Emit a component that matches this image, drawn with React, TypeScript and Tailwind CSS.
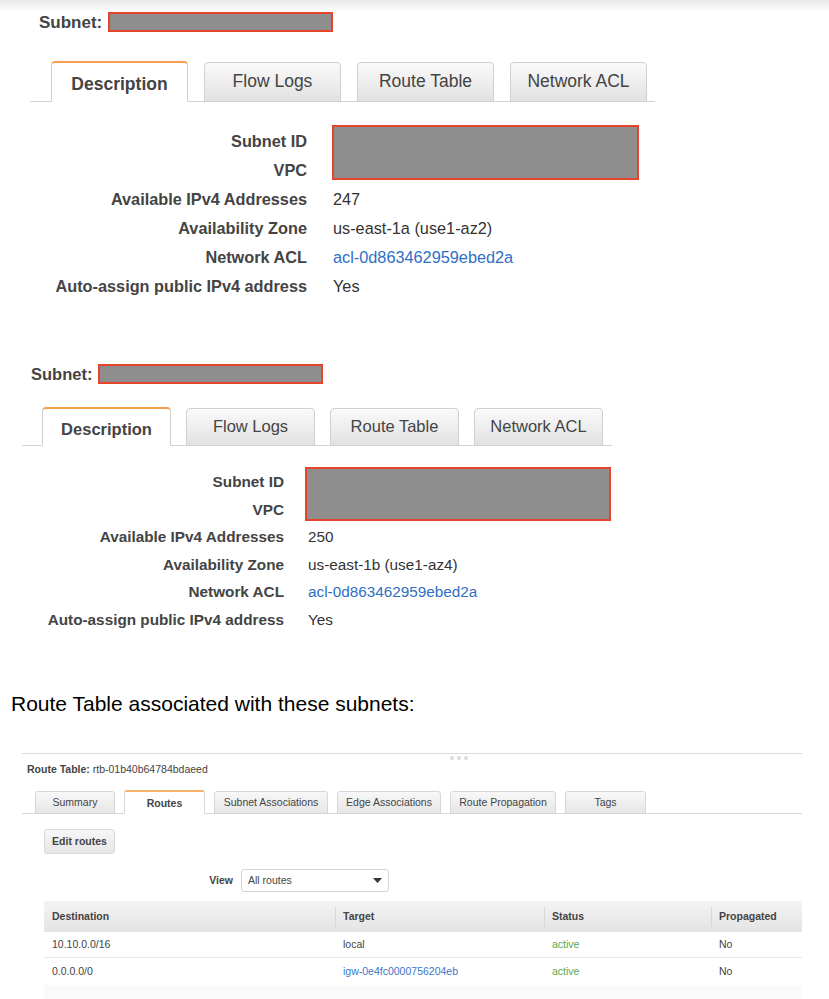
import React from "react";

type Row = { label: string; value: string; link?: boolean };

const redacted = "border-2 border-[#e8432b] bg-[#8e8e8e]";

const subnetA: Row[] = [
  { label: "Available IPv4 Addresses", value: "247" },
  { label: "Availability Zone", value: "us-east-1a (use1-az2)" },
  { label: "Network ACL", value: "acl-0d863462959ebed2a", link: true },
  { label: "Auto-assign public IPv4 address", value: "Yes" },
];

const subnetB: Row[] = [
  { label: "Available IPv4 Addresses", value: "250" },
  { label: "Availability Zone", value: "us-east-1b (use1-az4)" },
  { label: "Network ACL", value: "acl-0d863462959ebed2a", link: true },
  { label: "Auto-assign public IPv4 address", value: "Yes" },
];

const detailTabs = ["Description", "Flow Logs", "Route Table", "Network ACL"];

/* ------------------------------------------------------------------ */
/*  Subnet detail panels                                               */
/* ------------------------------------------------------------------ */
function SubnetLarge() {
  return (
    <div>
      <div className="flex h-[20px] items-center pl-[39px]">
        <span className="pt-[1px] text-[17px] font-bold text-[#444]">Subnet:</span>
        <div className={`ml-[6px] h-[20px] w-[225px] ${redacted}`} />
      </div>

      <div className="mt-[29px] ml-[30px] flex w-[625px] items-end gap-[16px] border-b border-[#d2d2d2] pl-[21px]">
        {detailTabs.map((t, i) =>
          i === 0 ? (
            <div
              key={t}
              className="-mb-px flex h-[41px] w-[137px] items-center justify-center rounded-t-[4px] border border-t-2 border-[#d0d0d0] border-t-[#f5a04c] border-b-white bg-white pt-[4px] text-[17.5px] font-bold text-[#444]"
            >
              {t}
            </div>
          ) : (
            <div
              key={t}
              className="-mb-px flex h-[40px] w-[137px] items-center justify-center rounded-t-[4px] border border-[#d0d0d0] bg-linear-to-b from-[#fafafa] to-[#e2e2e2] pb-[1px] text-[17.5px] text-[#444]"
            >
              {t}
            </div>
          ),
        )}
      </div>

      <div className="mt-[25px] grid auto-rows-[29px] grid-cols-[307px_1fr] items-center gap-x-[26px] text-[16.3px]">
        <div className="text-right font-bold text-[#444]">Subnet ID</div>
        <div className={`row-span-2 -mt-[2px] -ml-[1px] h-[55px] w-[307px] self-start ${redacted}`} />
        <div className="text-right font-bold text-[#444]">VPC</div>
        {subnetA.map((r) => (
          <React.Fragment key={r.label}>
            <div className="text-right font-bold text-[#444]">{r.label}</div>
            <div className={r.link ? "text-[#2f6fc4]" : "text-[#333]"}>{r.value}</div>
          </React.Fragment>
        ))}
      </div>
    </div>
  );
}

function SubnetSmall() {
  return (
    <div>
      <div className="flex h-[20px] items-center pl-[31px]">
        <span className="text-[16.5px] font-bold text-[#444]">Subnet:</span>
        <div className={`ml-[6px] h-[20px] w-[225px] ${redacted}`} />
      </div>

      <div className="mt-[23px] ml-[22px] flex w-[590px] items-end gap-[15px] border-b border-[#d2d2d2] pl-[20px]">
        {detailTabs.map((t, i) =>
          i === 0 ? (
            <div
              key={t}
              className="-mb-px flex h-[39px] w-[129px] items-center justify-center rounded-t-[4px] border border-t-2 border-[#d0d0d0] border-t-[#f5a04c] border-b-white bg-white pt-[4px] text-[16.5px] font-bold text-[#444]"
            >
              {t}
            </div>
          ) : (
            <div
              key={t}
              className="-mb-px flex h-[38px] w-[129px] items-center justify-center rounded-t-[4px] border border-[#d0d0d0] bg-linear-to-b from-[#fafafa] to-[#e2e2e2] pb-[1px] text-[16.5px] text-[#444]"
            >
              {t}
            </div>
          ),
        )}
      </div>

      <div className="mt-[23px] grid auto-rows-[27.5px] grid-cols-[284px_1fr] items-center gap-x-[24px] text-[15.3px]">
        <div className="text-right font-bold text-[#444]">Subnet ID</div>
        <div className={`row-span-2 -mt-[2px] -ml-[3px] h-[54px] w-[306px] self-start ${redacted}`} />
        <div className="text-right font-bold text-[#444]">VPC</div>
        {subnetB.map((r) => (
          <React.Fragment key={r.label}>
            <div className="text-right font-bold text-[#444]">{r.label}</div>
            <div className={r.link ? "text-[#2f6fc4]" : "text-[#333]"}>{r.value}</div>
          </React.Fragment>
        ))}
      </div>
    </div>
  );
}

/* ------------------------------------------------------------------ */
/*  Route table console panel                                          */
/* ------------------------------------------------------------------ */
const rtTabs = [
  { name: "Summary", w: "w-[80px]" },
  { name: "Routes", w: "w-[81px]", active: true },
  { name: "Subnet Associations", w: "w-[114px]" },
  { name: "Edge Associations", w: "w-[104px]" },
  { name: "Route Propagation", w: "w-[106px]" },
  { name: "Tags", w: "w-[81px]" },
];

const routes = [
  { dest: "10.10.0.0/16", target: "local", link: false },
  { dest: "0.0.0.0/0", target: "igw-0e4fc0000756204eb", link: true },
];

function HeaderCell({ label }: { label: string }) {
  return (
    <div className="flex items-center">
      <span className="h-[20px] w-px bg-[#d8d8d8]" />
      <span className="ml-[7px]">{label}</span>
    </div>
  );
}

function RouteTablePanel() {
  return (
    <div className="mt-[37px] ml-[22px] w-[780px] border-t border-[#dadada] text-[10.5px] text-[#444]">
      <div className="flex h-[8px] items-center gap-[3px] pl-[428px]">
        <span className="h-[4px] w-[4px] rounded-full bg-[#dcdcdc]" />
        <span className="h-[4px] w-[4px] rounded-full bg-[#dcdcdc]" />
        <span className="h-[4px] w-[4px] rounded-full bg-[#dcdcdc]" />
      </div>

      <div className="mt-[1px] pl-[5px] leading-[13px]">
        <span className="font-bold">Route Table:</span> rtb-01b40b64784bdaeed
      </div>

      <div className="mt-[14px] flex items-end gap-[9px] border-b border-[#d8d8d8] pl-[13px]">
        {rtTabs.map((t) =>
          t.active ? (
            <div
              key={t.name}
              className={`-mb-px flex h-[24px] ${t.w} items-center justify-center rounded-t-[3px] border border-t-2 border-[#d6d6d6] border-t-[#f8b36a] border-b-white bg-white pt-[2px] font-bold`}
            >
              {t.name}
            </div>
          ) : (
            <div
              key={t.name}
              className={`-mb-px flex h-[23px] ${t.w} items-center justify-center rounded-t-[3px] border border-[#d6d6d6] bg-linear-to-b from-[#f8f8f8] to-[#e6e6e6]`}
            >
              {t.name}
            </div>
          ),
        )}
      </div>

      <button
        type="button"
        className="mt-[15px] ml-[22px] flex h-[25px] w-[71px] items-center justify-center rounded-[3px] border border-[#dadada] bg-linear-to-b from-[#f7f7f7] to-[#e6e6e6] font-bold text-[#444]"
      >
        Edit routes
      </button>

      <div className="mt-[15px] flex items-center">
        <div className="w-[211px] text-right font-bold">View</div>
        <div className="ml-[8px] flex h-[23px] w-[148px] items-center justify-between rounded-[3px] border border-[#d4d4d4] bg-white pr-[6px] pl-[6px]">
          <span>All routes</span>
          <svg width="9" height="5" viewBox="0 0 9 5">
            <polygon points="0,0 9,0 4.5,5" fill="#333" />
          </svg>
        </div>
      </div>

      <div className="mt-[9px] ml-[22px] w-[758px]">
        <div className="grid h-[31px] grid-cols-[291px_209px_167px_91px] bg-linear-to-b from-[#f4f4f4] to-[#e4e4e4] font-bold">
          <div className="flex items-center pl-[8px]">Destination</div>
          <HeaderCell label="Target" />
          <HeaderCell label="Status" />
          <HeaderCell label="Propagated" />
        </div>
        {routes.map((r, i) => (
          <div
            key={r.dest}
            className={`grid grid-cols-[291px_209px_167px_91px] items-center ${
              i === 0 ? "h-[26px] border-b border-[#e8e8e8]" : "h-[27px]"
            }`}
          >
            <div className="pl-[8px]">{r.dest}</div>
            <div className={`pl-[8px] ${r.link ? "text-[#3a76c8]" : ""}`}>{r.target}</div>
            <div className="pl-[8px] text-[#5aa64f]">active</div>
            <div className="pl-[8px]">No</div>
          </div>
        ))}
        <div className="h-[20px] bg-[#fafafa]" />
      </div>
    </div>
  );
}

export default function App() {
  return (
    <div className="min-h-[999px] w-[829px] overflow-hidden bg-white font-['Liberation_Sans',Arial,sans-serif]">
      <div className="h-[12px] bg-linear-to-b from-[#e9e9e9] to-white" />
      <SubnetLarge />
      <div className="mt-[63px]">
        <SubnetSmall />
      </div>
      <div className="mt-[58px] pl-[11px] text-[21px] leading-[24px] text-black">
        Route Table associated with these subnets:
      </div>
      <RouteTablePanel />
    </div>
  );
}
